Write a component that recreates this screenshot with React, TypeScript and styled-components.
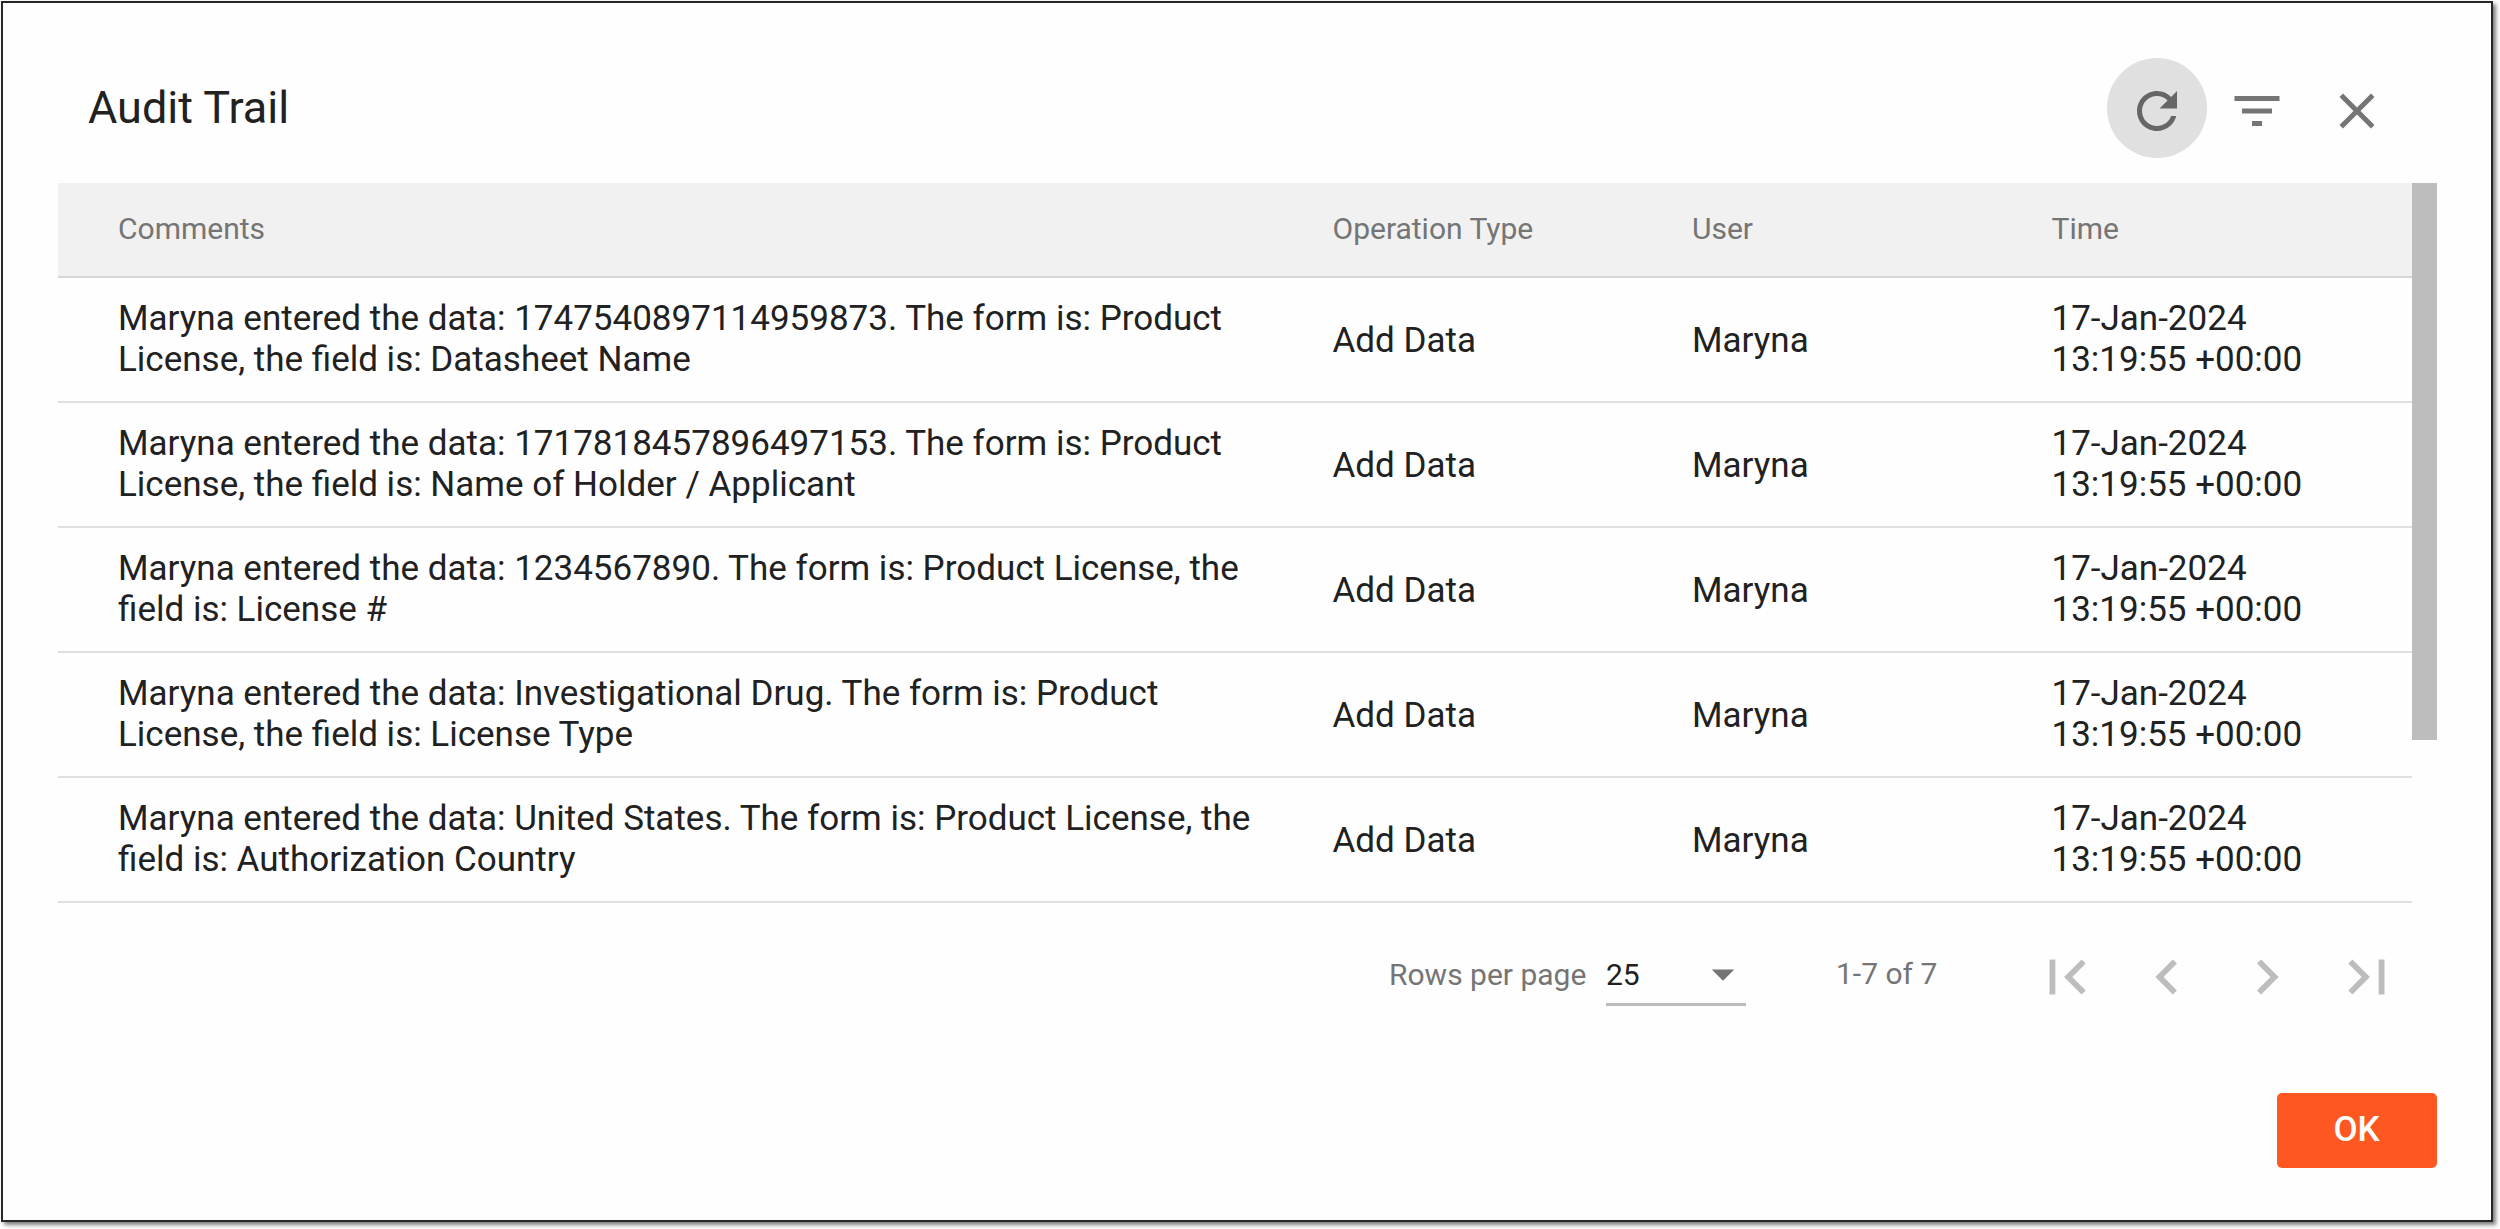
import React from "react";
import styled, { createGlobalStyle } from "styled-components";

const GlobalStyle = createGlobalStyle`
  *, *::before, *::after { box-sizing: border-box; }
  body { margin: 0; background: #fff; }
`;

const Page = styled.div`
  width: 2500px;
  height: 1229px;
  padding: 1px 7px 7px 1px;
  overflow: hidden;
  background: #fff;
  font-family: Roboto, "Liberation Sans", sans-serif;
  color: #212121;
`;

const Dialog = styled.section`
  width: 100%;
  height: 100%;
  display: flex;
  flex-direction: column;
  border: 2px solid #25282a;
  background: #fefefe;
  box-shadow: 3px 3px 4px rgba(0, 0, 0, 0.5);
`;

const Header = styled.header`
  height: 180px;
  flex: none;
  display: flex;
  justify-content: space-between;
  padding: 55px 84px 0 85px;
`;

const Title = styled.h1`
  margin: 0;
  padding-top: 23px;
  font-size: 45px;
  line-height: 54px;
  font-weight: 400;
  white-space: nowrap;
`;

const Actions = styled.div`
  display: flex;
`;

const IconButton = styled.button<{ $active?: boolean }>`
  width: 100px;
  height: 100px;
  padding: 5px 0 0;
  border: 0;
  border-radius: 50%;
  display: flex;
  align-items: center;
  justify-content: center;
  color: ${(p) => (p.$active ? "#666" : "#757575")};
  background: ${(p) => (p.$active ? "#e0e0e0" : "transparent")};
`;

const Body = styled.div`
  height: 722px;
  flex: none;
  display: flex;
  margin: 0 54px 0 55px;
`;

const Table = styled.div`
  width: 2354px;
`;

const Scrollbar = styled.div`
  width: 25px;
  height: 557px;
  background: #bdbdbd;
`;

const Row = styled.div`
  height: 125px;
  display: grid;
  grid-template-columns: 1214.5px 359.5px 359.5px 1fr;
  align-items: center;
  padding-left: 60px;
  border-bottom: 2px solid #e0e0e0;
  font-size: 35px;
  line-height: 41px;
`;

const HeadRow = styled(Row)`
  height: 95px;
  background: #f1f1f1;
  border-bottom-color: #d6d6d6;
  color: #757575;
  font-size: 30px;
`;

const HeadCell = styled.div`
  padding-bottom: 2px;
`;

const Cell = styled.div<{ $multiline?: boolean }>`
  padding: ${(p) => (p.$multiline ? "0 0 2px" : "1px 0 0")};
  white-space: pre-line;
`;

const Pagination = styled.div`
  height: 100px;
  margin-top: 22px;
  flex: none;
  display: flex;
  justify-content: flex-end;
  align-items: center;
  padding-right: 74px;
  font-size: 30px;
  color: #757575;
`;

const Label = styled.span`
  width: 217px;
  line-height: 40px;
  padding-bottom: 5px;
  white-space: nowrap;
`;

const Select = styled.div`
  width: 140px;
  height: 59px;
  margin-bottom: 2px;
  display: flex;
  justify-content: space-between;
  align-items: center;
  border-bottom: 3px solid #bdbdbd;
  color: #212121;
`;

const DropdownArrow = styled.svg`
  width: 56px;
  height: 56px;
  margin-right: -5px;
  padding-bottom: 2px;
  fill: #757575;
`;

const Range = styled.span`
  width: 181px;
  margin-left: 90px;
  line-height: 40px;
  padding-bottom: 7px;
  white-space: nowrap;
`;

const PageButton = styled.button`
  width: 100px;
  height: 100px;
  padding: 0 0 1px;
  border: 0;
  background: transparent;
  display: flex;
  align-items: center;
  justify-content: center;
  color: #bdbdbd;
`;

const Footer = styled.footer`
  display: flex;
  justify-content: flex-end;
  padding: 66px 54px 0 0;
`;

const OkButton = styled.button`
  width: 160px;
  height: 75px;
  padding: 0 1px 1px 0;
  border: 0;
  border-radius: 5px;
  background: #ff5722;
  color: #fff;
  font-family: inherit;
  font-size: 35px;
  font-weight: 500;
  line-height: 74px;
`;

const Icon = ({ d, size }: { d: string; size: number }) => (
  <svg width={size} height={size} viewBox="0 0 24 24" fill="currentColor">
    <path d={d} />
  </svg>
);

const REFRESH =
  "M17.65 6.35C16.2 4.9 14.21 4 12 4c-4.42 0-7.99 3.58-7.99 8s3.57 8 7.99 8c3.73 0 6.84-2.55 7.73-6h-2.08c-.82 2.33-3.04 4-5.65 4-3.31 0-6-2.69-6-6s2.69-6 6-6c1.66 0 3.14.69 4.22 1.78L13 11h7V4l-2.35 2.35z";
const FILTER = "M10 18h4v-2h-4v2zM3 6v2h18V6H3zm3 7h12v-2H6v2z";
const CLOSE =
  "M19 6.41L17.59 5 12 10.59 6.41 5 5 6.41 10.59 12 5 17.59 6.41 19 12 13.41 17.59 19 19 17.59 13.41 12z";
const PAGE_ICONS = [
  { label: "First page", d: "M18.41 16.59L13.82 12l4.59-4.59L17 6l-6 6 6 6zM6 6h2v12H6z" },
  { label: "Previous page", d: "M15.41 7.41L14 6l-6 6 6 6 1.41-1.41L10.83 12z" },
  { label: "Next page", d: "M10 6L8.59 7.41 13.17 12l-4.58 4.59L10 18l6-6z" },
  { label: "Last page", d: "M5.59 7.41L10.18 12l-4.59 4.59L7 18l6-6-6-6zM16 6h2v12h-2z" },
];

const COMMENTS = [
  "Maryna entered the data: 1747540897114959873. The form is: Product\nLicense, the field is: Datasheet Name",
  "Maryna entered the data: 1717818457896497153. The form is: Product\nLicense, the field is: Name of Holder / Applicant",
  "Maryna entered the data: 1234567890. The form is: Product License, the\nfield is: License #",
  "Maryna entered the data: Investigational Drug. The form is: Product\nLicense, the field is: License Type",
  "Maryna entered the data: United States. The form is: Product License, the\nfield is: Authorization Country",
];

export default function App() {
  return (
    <>
      <GlobalStyle />
      <Page>
        <Dialog>
          <Header>
            <Title>Audit Trail</Title>
            <Actions>
              <IconButton $active aria-label="Refresh">
                <Icon d={REFRESH} size={60} />
              </IconButton>
              <IconButton aria-label="Filter">
                <Icon d={FILTER} size={60} />
              </IconButton>
              <IconButton aria-label="Close">
                <Icon d={CLOSE} size={60} />
              </IconButton>
            </Actions>
          </Header>
          <Body>
            <Table>
              <HeadRow>
                <HeadCell>Comments</HeadCell>
                <HeadCell>Operation Type</HeadCell>
                <HeadCell>User</HeadCell>
                <HeadCell>Time</HeadCell>
              </HeadRow>
              {COMMENTS.map((comment) => (
                <Row key={comment}>
                  <Cell $multiline>{comment}</Cell>
                  <Cell>Add Data</Cell>
                  <Cell>Maryna</Cell>
                  <Cell $multiline>{"17-Jan-2024\n13:19:55 +00:00"}</Cell>
                </Row>
              ))}
            </Table>
            <Scrollbar />
          </Body>
          <Pagination>
            <Label>Rows per page</Label>
            <Select>
              25
              <DropdownArrow viewBox="0 0 24 24">
                <path d="M7 10l5 5 5-5z" />
              </DropdownArrow>
            </Select>
            <Range>1-7 of 7</Range>
            {PAGE_ICONS.map((icon) => (
              <PageButton key={icon.label} aria-label={icon.label}>
                <Icon d={icon.d} size={70} />
              </PageButton>
            ))}
          </Pagination>
          <Footer>
            <OkButton>OK</OkButton>
          </Footer>
        </Dialog>
      </Page>
    </>
  );
}
